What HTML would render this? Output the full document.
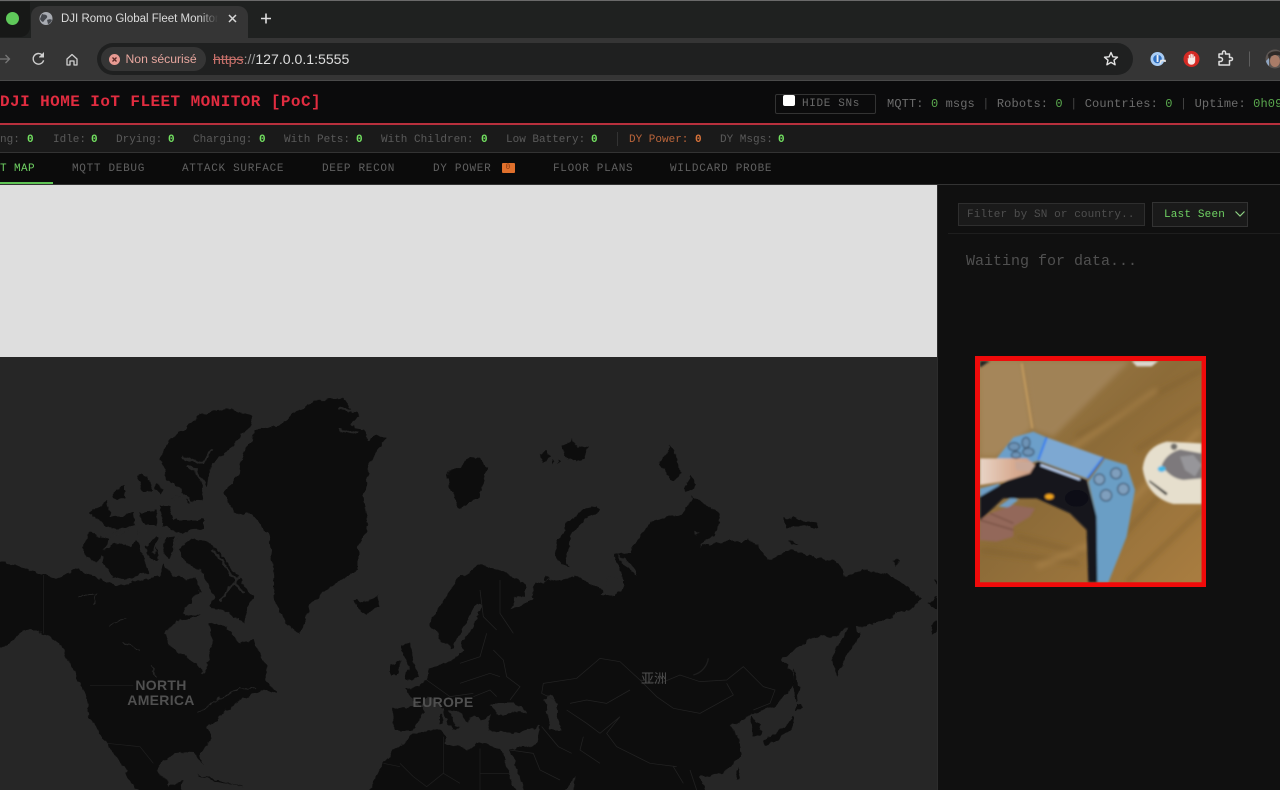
<!DOCTYPE html>
<html><head><meta charset="utf-8"><title>DJI Romo Global Fleet Monitor</title>
<style>
html,body{margin:0;padding:0;background:#111;width:1280px;height:790px;overflow:hidden}
.a{position:absolute}
#r{position:relative;width:1280px;height:790px;overflow:hidden;font-family:"Liberation Mono",monospace}
.t{position:absolute;white-space:pre}
.s{font-family:"Liberation Sans",sans-serif}
.st{top:133px;font-size:11px;line-height:14px;color:#5a5a5a}
.z{top:133px;font-size:11px;line-height:14px;color:#72e060;font-weight:bold}
.tb{top:162px;font-size:11px;line-height:14px;letter-spacing:.7px;color:#606060}
.h{top:97px;font-size:12px;line-height:14px;letter-spacing:.12px;color:#6c6c6c}
.g{color:#5aa84e}
</style></head><body><div id="r">
<!-- browser chrome -->
<div class="a" style="left:0;top:0;width:1280px;height:1px;background:#6a6a6a"></div>
<div class="a" style="left:0;top:1px;width:1280px;height:37px;background:#1f2120"></div>
<div class="a" style="left:0;top:38px;width:1280px;height:42px;background:#353535"></div>
<div class="a" style="left:0;top:80px;width:1280px;height:1px;background:#4a4a4a"></div>
<div class="a" style="left:0;top:2px;width:30px;height:35px;background:#171817;border-radius:0 0 10px 0"></div>
<div class="a" style="left:6px;top:12px;width:13px;height:13px;border-radius:50%;background:#5fc95a"></div>
<div class="a" style="left:31px;top:6px;width:217px;height:32px;background:#353535;border-radius:10px 10px 0 0"></div>
<svg class="a" style="left:0;top:0" width="300" height="80" fill="none">
<circle cx="46" cy="18.500" r="6.500" fill="#a8abb2"/>
<path d="M42 14c2 1 4 0 5 2s-2 3-3 5-3 0-4-2zM47 20c2-1 4-1 5 0-1 2-2 4-4 4z" fill="#45484e"/>
<path d="M229 15l7 7M236 15l-7 7" stroke="#d8d8d8" stroke-width="1.500"/>
<path d="M266 13.500v10M261 18.500h10" stroke="#dedede" stroke-width="1.600"/>
<path d="M0 59h9M5.500 55l4 4-4 4" stroke="#777" stroke-width="1.300"/>
<path d="M43 56a5.300 5.300 0 1 0 .6 4.300" stroke="#cfcfcf" stroke-width="1.400"/>
<path d="M43.500 52.500v4.500h-4.500" fill="#cfcfcf" stroke="#cfcfcf" stroke-width="1"/>
<path d="M67 59l5-4.500 5 4.500v6h-3v-4h-4v4h-3z" stroke="#cfcfcf" stroke-width="1.300" stroke-linejoin="round"/>
</svg>
<div class="t s" style="left:61px;top:11px;width:157px;overflow:hidden;font-size:11.500px;line-height:16px;color:#dcdcdc;-webkit-mask-image:linear-gradient(90deg,#000 88%,transparent);mask-image:linear-gradient(90deg,#000 88%,transparent)">DJI Romo Global Fleet Monitor</div>
<div class="a" style="left:97px;top:43px;width:1036px;height:32px;background:#1f2020;border-radius:16px"></div>
<div class="a" style="left:101px;top:47px;width:105px;height:24px;background:#353535;border-radius:12px"></div>
<div class="a" style="left:109px;top:53.500px;width:11px;height:11px;border-radius:50%;background:#e89a92"></div>
<svg class="a" style="left:109px;top:53.500px" width="11" height="11"><path d="M3.500 3.500l4 4M7.500 3.500l-4 4" stroke="#5a2a28" stroke-width="1.300"/></svg>
<div class="t s" style="left:125.500px;top:51px;font-size:12.200px;line-height:16px;color:#e8a79f">Non sécurisé</div>
<div class="t s" style="left:213px;top:51px;font-size:14.100px;line-height:16px;color:#dedede"><span style="color:#c9716b;text-decoration:line-through">https</span><span style="color:#9a9a9a">://</span>127.0.0.1:5555</div>
<svg class="a" style="left:1100px;top:48px" width="180" height="24" fill="none">
<path d="M11 4.500l1.900 4.300 4.600.4-3.500 3 1.100 4.600-4.100-2.400-4.100 2.400 1.100-4.600-3.500-3 4.600-.4z" stroke="#e2e2e2" stroke-width="1.400" stroke-linejoin="round"/>
<circle cx="57.500" cy="11" r="7" fill="#a9cdf5"/><circle cx="57.500" cy="11" r="4.300" fill="#2f6fc0"/><rect x="56.600" y="7" width="1.900" height="7" fill="#e8eef5"/>
<path d="M60 15.500l1-3h4v1.500" stroke="#e8e8e8" stroke-width="1.600"/>
<circle cx="91.500" cy="11" r="8" fill="#d42a24"/>
<path d="M88 10v3.500c0 2 1.500 3 3.500 3s3.500-1.300 3.500-3.500V8.500h-1V10h-.6V6.500h-1V10h-.7V6h-1.100v4h-.7V7h-1v5z" fill="#f6e9e6" stroke="#f6e9e6" stroke-width=".4"/>
<path d="M119 6h3.500V4.500a1.500 1.500 0 0 1 3 0V6h4v3.500h1.500a1.500 1.500 0 0 1 0 3h-1.500V17h-10.500v-3.500h1.500a2 2 0 0 0 0-4H119z" stroke="#dedede" stroke-width="1.500" stroke-linejoin="round"/>
<path d="M149.500 3.500v15" stroke="#5e5e5e" stroke-width="1"/>
<circle cx="175" cy="11" r="9.500" fill="#5c5552"/><path d="M168 7c2-4 10-5 14-2v5l-3-3-8 1-2 4z" fill="#2f2a28"/><ellipse cx="175" cy="13" rx="5" ry="6" fill="#a97c68"/><path d="M166 13a9.500 9.500 0 0 0 3 5l0-8z" fill="#8fa6c2"/>
</svg>
<!-- app header -->
<div class="a" style="left:0;top:81px;width:1280px;height:42px;background:#0b0b0c"></div>
<div class="a" style="left:0;top:123px;width:1280px;height:2px;background:#b8303d"></div>
<div class="a" style="left:0;top:125px;width:1280px;height:27px;background:#1a1a1a"></div>
<div class="a" style="left:0;top:152px;width:1280px;height:1px;background:#333"></div>
<div class="a" style="left:0;top:153px;width:1280px;height:31px;background:#0b0b0b"></div>
<div class="a" style="left:0;top:184px;width:1280px;height:1px;background:#333"></div>
<div class="t" style="left:0;top:92px;font-size:16px;line-height:20px;font-weight:bold;letter-spacing:.43px;color:#e12c40">DJI HOME IoT FLEET MONITOR [PoC]</div>
<div class="a" style="left:775px;top:94px;width:99px;height:18px;border:1px solid #333;border-radius:2px"></div>
<div class="a" style="left:783px;top:95px;width:12px;height:11px;background:#fff;border-radius:2px"></div>
<div class="t" style="left:802px;top:97px;font-size:11px;line-height:14px;letter-spacing:.65px;color:#6a6a6a">HIDE SNs</div>
<div class="t h" style="left:887px">MQTT: <span class="g">0</span> msgs <span style="color:#444">|</span> Robots: <span class="g">0</span> <span style="color:#444">|</span> Countries: <span class="g">0</span> <span style="color:#444">|</span> Uptime: <span class="g">0h09m</span></div>
<!-- stats -->
<div class="t st" style="left:0">ng:</div><div class="t z" style="left:27px">0</div>
<div class="t st" style="left:53px">Idle:</div><div class="t z" style="left:91px">0</div>
<div class="t st" style="left:116px">Drying:</div><div class="t z" style="left:168px">0</div>
<div class="t st" style="left:193px">Charging:</div><div class="t z" style="left:259px">0</div>
<div class="t st" style="left:284px">With Pets:</div><div class="t z" style="left:356px">0</div>
<div class="t st" style="left:381px">With Children:</div><div class="t z" style="left:481px">0</div>
<div class="t st" style="left:506px">Low Battery:</div><div class="t z" style="left:591px">0</div>
<div class="a" style="left:617px;top:132px;width:1px;height:14px;background:#333"></div>
<div class="t st" style="left:629px;color:#b9643a">DY Power:</div><div class="t z" style="left:695px;color:#d9733a">0</div>
<div class="t st" style="left:720px">DY Msgs:</div><div class="t z" style="left:778px">0</div>
<!-- tabs -->
<div class="t tb" style="left:0;color:#6fd163;letter-spacing:.4px">T MAP</div>
<div class="a" style="left:0;top:182px;width:53px;height:2px;background:#5fc455"></div>
<div class="t tb" style="left:72px">MQTT DEBUG</div>
<div class="t tb" style="left:182px">ATTACK SURFACE</div>
<div class="t tb" style="left:322px">DEEP RECON</div>
<div class="t tb" style="left:433px">DY POWER</div>
<div class="a" style="left:502px;top:163px;width:13px;height:10px;background:#e0702c;border-radius:1px"></div>
<div class="t" style="left:505.500px;top:163px;font-size:8px;line-height:10px;color:#8a3a10">0</div>
<div class="t tb" style="left:553px">FLOOR PLANS</div>
<div class="t tb" style="left:670px">WILDCARD PROBE</div>
<!-- sidebar -->
<div class="a" style="left:937px;top:185px;width:343px;height:605px;background:#101010"></div>
<div class="a" style="left:937px;top:185px;width:1px;height:605px;background:#2c2c2c"></div>
<div class="a" style="left:948px;top:233px;width:332px;height:1px;background:#1e1e1e"></div>
<div class="a" style="left:958px;top:203px;width:185px;height:21px;background:#1a1a1a;border:1px solid #2e2e2e"></div>
<div class="t" style="left:967px;top:208px;font-size:11px;line-height:14px;letter-spacing:.1px;color:#4f4f4f">Filter by SN or country..</div>
<div class="a" style="left:1152px;top:202px;width:94px;height:23px;background:#1a1a1a;border:1px solid #333"></div>
<div class="t" style="left:1164px;top:208px;font-size:11px;line-height:14px;letter-spacing:.18px;color:#6fd163">Last Seen</div>
<svg class="a" style="left:1234px;top:210px" width="12" height="8" fill="none"><path d="M1.500 1.500l4.500 4.500 4.500-4.500" stroke="#8fd184" stroke-width="1.200"/></svg>
<div class="t" style="left:966px;top:253px;font-size:15px;line-height:18px;color:#505050">Waiting for data...</div>
<!-- map -->
<div class="a" style="left:0;top:185px;width:937px;height:172px;background:#dedede"></div>
<svg class="a" style="left:0;top:357px" width="937" height="433" viewBox="0 357 937 433">
<defs><filter id="rg" filterUnits="userSpaceOnUse" x="-20" y="340" width="980" height="470"><feTurbulence type="fractalNoise" baseFrequency=".11" numOctaves="3" seed="4" result="n"/><feDisplacementMap in="SourceGraphic" in2="n" scale="7" xChannelSelector="R" yChannelSelector="G"/></filter></defs>
<rect x="0" y="357" width="937" height="433" fill="#262626"/>
<g filter="url(#rg)">
<g transform="translate(0,350) scale(.33333)" fill="#0a0a0a">
<path d="M900 855L860 820 825 760 820 650 805 560 760 495 700 490 672 420 720 370 725 320 770 240 840 225 880 190 950 150 1030 145 1075 200 1050 225 1090 240 1100 270 1130 255 1158 265 1110 340 1090 440 1105 520 1075 600 1075 660 990 710 930 770z"/>
<path d="M520 260L600 195 680 175 750 195 755 225 700 285 640 340 620 400 600 450 560 460 545 420 500 385 480 320 510 280z"/>
<path d="M270 490L320 450 330 500 400 490 405 525 350 545 310 520z"/>
<path d="M410 380L440 375 460 420 430 430zM340 430L375 400 375 445 350 450zM420 490L470 480 470 525 440 525zM470 400L490 420 480 435 465 420z"/>
<path d="M480 465L510 470 520 510 610 510 610 535 540 545 490 530z"/>
<path d="M250 590L265 548 330 570 290 635 260 620z"/>
<path d="M305 600L360 580 390 590 410 570 445 665 395 690 340 680 310 640z"/>
<path d="M435 590L470 560 475 630 450 625zM490 565L525 560 510 625 490 610z"/>
<path d="M535 600L570 565 630 575 700 660 760 740 730 820 690 790 630 770 640 740 600 660 560 640z"/>
<path d="M-30 625L120 670 170 690 230 655 300 690 350 710 420 690 480 680 490 640 520 680 560 690 590 680 600 720 570 760 550 790 600 800 530 810 495 850 510 890 590 940 610 975 625 930 640 880 630 815 680 830 720 880 760 870 800 950 800 990 830 1030 790 1020 740 1040 700 1060 660 1100 620 1130 640 1165 600 1210 610 1245 580 1200 500 1220 470 1260 510 1310 550 1290 540 1350 430 1350 370 1250 320 1180 270 1110 260 1040 230 980 180 880 130 850 70 840 30 880-30 905z"/>
<path d="M590 1272L650 1290 700 1305 730 1312 660 1300z"/>
<path d="M1060 750L1100 755 1130 740 1140 770 1100 795 1075 780z"/>
<path d="M1340 370L1380 350 1400 330 1440 325 1460 350 1440 440 1380 475 1345 400z"/>
<path d="M1205 885L1230 880 1240 930 1260 985 1215 990 1225 950zM1170 945L1200 935 1195 975 1170 975z"/>
<path d="M1180 1075L1260 1070 1275 1085 1240 1140 1180 1140z"/>
<path d="M1095 1350L1150 1235 1240 1150 1320 1140 1340 1160 1335 1180 1400 1200 1440 1180 1500 1195 1560 1350z"/>
<path d="M1320 1090h8v30h-8zM1355 1125l25 3-20 12z"/>
</g>
<g transform="translate(0,350) scale(.33333)" fill="none" stroke="#262626">
<g stroke-width="7"><path d="M545 320l60 20 30-45M560 345l30 20 25 50M1010 175l50 5M1015 240l60 5M640 600l30 40 60 90M720 680l-60 70M500 460l40-25 40 25M330 560l60-20M410 540l20 40M480 560l-20 50M540 550l-20 60"/></g>
<g stroke-width="3"><path d="M240 740l50-10-15 30M330 830l50-25M370 880l50 20M450 950l20 30M590 1090l60-40 60-30 60-10"/></g>
</g>
<g transform="translate(460,350) scale(.33333)" fill="#0a0a0a">
<path d="M-90 830L-80 800-10 690 60 645 110 655 190 700 198 740 160 745 150 780 220 750 230 700 260 695 350 680 420 710 440 740 470 720 490 690 460 610 510 610 530 570 570 520 660 490 700 440 780 490 770 545 720 590 800 570 860 570 900 590 920 630 1000 600 1060 620 1140 640 1155 680 1210 660 1300 680 1385 745 1360 775 1300 790 1290 810 1210 830 1160 830 1130 860 1060 860 960 930 1000 960 1000 1010 940 1070 880 1090 815 1130 840 1180 840 1220 790 1270 720 1280 740 1350 340 1350 345 1275 300 1350 200 1350 150 1200 235 1180 240 1130 160 1150 85 1145 90 1095 60 1110 40 1090 25 1120 0 1090-30 1080-15 1130-40 1125-50 1075-80 1050-100 1040-120 1070-165 1020-100 990-90 955-30 935 10 900 0 880 20 860 40 830 70 760 50 760 10 830-10 870-30 900-40 880z"/>
<path d="M410 465L420 480 370 510 330 560 320 630 330 650 290 635 285 600 320 520 370 480z"/>
<path d="M600 340L630 285 650 320 665 365 640 395 605 350zM670 420L690 375 712 400 680 430z"/>
<path d="M970 500L1025 510 1070 520 1075 535 1030 525 975 535zM990 565l25 15-20 5zM1300 630l25 5-25 10zM225 700l15 10-20 20zM255 680l15 10-15 5z"/>
<path d="M235 310l25-10 10 20-25 20zM305 290l30-25 15 30 40-5-15 30-25 20-35-20zM290 330l10 5-5 5zM270 330l10 5-5 8z"/>
<path d="M1180 815L1200 850 1130 980 1115 920 1150 860z"/>
<path d="M1005 950l15 70-15 40-5-60zM1005 1065l25 8-25 12zM1000 1100v30l-40 30-45 30v-20l60-40zM870 1100l35 25-5 35h-20z"/>
<path d="M1420 690l15 2v18zM1405 760l27-20v40zM1420 820l12-10v30l-15 15z"/>
<path d="M830 1250l12 30-12 10z"/>
</g>
<g transform="translate(460,350) scale(.33333)" fill="#262626">
<path d="M95 1060l70 0 35 25-90 8zM250 1050l25-15 20 30-5 40 12 35-30 0-5-50z"/>
<path d="M425 735l20-50 30-5 15 30-25 30zM470 610l50 40 15 30-30-20zM700 540l20 10-15 5z"/>
</g>
</g>
<g transform="translate(460,350) scale(.33333)" fill="none" stroke="#232323" stroke-width="2.200">
<path d="M250 1000l100-15 70-60 60 10 60 55 60 10 60-25 60 20 80-5 50-40 60 60 35 10-15 40-50 20M540 990l50 50 50 35 80 15 100-55-20-35M250 1000l-5 30 40 20M330 1060l50-10 60 10 70-40M320 1080l60 40 40 30 60-50M480 1100l-40 50 30 40 40 20 60 30 80 10M370 1160l-10 40 60 40M245 1130l50 60 40 20M150 1200l70 10 20 50 60 30M100 900l30 30 10 50 40 30-30 40M0 1000l90-30 30 10M40 1040l50-20 20 20M0 940l60-20 20-70M60 720l10 80 40 40M120 690l0 100 40 60M-100 990l70 50 70-10M640 1250l30 50M690 1260l20 60"/>
<path d="M700 975a60 60 0 0 0 45-50" stroke="#1e1e1e" stroke-width="4"/>
<path d="M60 1195v130M60 1270l90 0" stroke="#1e1e1e"/>
</g>
<g transform="translate(0,350) scale(.33333)" fill="none" stroke="#202020" stroke-width="2">
<path d="M130 675V850M270 1007H400M320 1180l100 10 40 50M1200 1240l40 40 40 30 50-40 50 30M1330 1160v110M1150 1240l50 10"/>
</g>
<text x="161" y="690" text-anchor="middle" font-family="Liberation Sans,sans-serif" font-weight="bold" font-size="14" letter-spacing=".3" fill="#505050">NORTH</text>
<text x="161" y="705" text-anchor="middle" font-family="Liberation Sans,sans-serif" font-weight="bold" font-size="14" letter-spacing=".3" fill="#505050">AMERICA</text>
<text x="443" y="707" text-anchor="middle" font-family="Liberation Sans,sans-serif" font-weight="bold" font-size="14" letter-spacing=".3" fill="#505050">EUROPE</text>
<text x="654" y="683" text-anchor="middle" font-family="Noto Sans CJK SC,sans-serif" font-size="13" fill="#505050">亚洲</text>
</svg>
<!-- overlay photo -->
<svg class="a" style="left:975px;top:356px" width="231" height="231" viewBox="975 356 231 231">
<defs><clipPath id="c"><rect x="30" y="33" width="665" height="664"/></clipPath>
<linearGradient id="w" x1="0" y1="0" x2="1" y2="1"><stop offset="0" stop-color="#a0814f"/><stop offset=".45" stop-color="#8c6b38"/><stop offset="1" stop-color="#a97d40"/></linearGradient>
<linearGradient id="th" x1="0" y1="0" x2="1" y2="0"><stop offset="0" stop-color="#e8d4c6"/><stop offset=".6" stop-color="#d8ac92"/><stop offset="1" stop-color="#c99a80"/></linearGradient>
<filter id="b" x="-5%" y="-5%" width="110%" height="110%"><feGaussianBlur stdDeviation="8"/></filter>
<filter id="b2" x="-5%" y="-5%" width="110%" height="110%"><feGaussianBlur stdDeviation="3"/></filter></defs>
<g transform="translate(970,350) scale(.33333)">
<rect x="15" y="18" width="693" height="693" fill="#f00a0a"/>
<g clip-path="url(#c)"><rect x="30" y="33" width="665" height="664" fill="url(#w)"/>
<g filter="url(#b)">
<path d="M30 33H155L185 235 80 320 30 320z" fill="#a5865a"/>
<path d="M160 33H480L250 260 190 240z" fill="#a08257"/>
<path d="M320 260L695 60M500 300L695 170M420 600L695 300M470 697L695 480M30 600l300 40M140 560l200 50" stroke="#7c5c2c" stroke-width="14" fill="none" opacity=".5"/>
<path d="M300 300L560 120M420 520L690 240M200 650L420 560" stroke="#b48c50" stroke-width="16" fill="none" opacity=".5"/>
</g>
<g filter="url(#b2)">
<path d="M155 40l32 195" stroke="#c99f5f" stroke-width="5" fill="none"/>
<path d="M30 33h30l-30 20z" fill="#222"/>
<path d="M485 33h80l-20 16h-45z" fill="#dcd8d0"/>
<path d="M80 325L130 262 190 245 230 262 205 332 110 360z" fill="#6c9fc9"/>
<path d="M30 415L90 400 30 490zM85 470l40-28 20 8-30 22z" fill="#6f9fc6"/>
<path d="M205 335L350 390 380 500 385 697H355L350 540 300 490 200 445 100 445 30 512 30 440 90 405z" fill="#14161e"/>
<path d="M230 262L400 322 350 385 205 332z" fill="#7da8d2"/>
<path d="M405 325L470 345 495 420 470 560 415 697H382L380 500 355 395z" fill="#6b9ec5"/>
<path d="M230 262L205 330M400 322L352 385" stroke="#2f7cf0" stroke-width="6" fill="none"/>
<path d="M212 345L330 388" stroke="#c6dcff" stroke-width="6" fill="none"/>
<path d="M30 325H170L195 345 180 370 100 395 30 405z" fill="url(#th)"/>
<path d="M135 335h50l8 14-15 16-40-5z" fill="#c9a898"/>
<path d="M60 490L130 465 195 475 180 500 130 530 130 560 80 575 30 570 30 510z" fill="#93675a"/>
<path d="M30 510l100 30M60 490l70 30" stroke="#6f4a3a" stroke-width="3" fill="none"/>
<ellipse cx="238" cy="440" rx="13" ry="8" fill="#f2a51c"/>
<ellipse cx="320" cy="445" rx="35" ry="25" fill="#0b0c12"/>
<g fill="#7f9fbd" stroke="#2d3f55" stroke-width="3"><circle cx="388" cy="388" r="16"/><circle cx="438" cy="370" r="16"/><circle cx="460" cy="417" r="17"/><circle cx="408" cy="436" r="17"/></g>
<g fill="#6d93b6" stroke="#2d3f55" stroke-width="3"><ellipse cx="132" cy="290" rx="17" ry="12"/><ellipse cx="168" cy="278" rx="12" ry="16"/><ellipse cx="175" cy="306" rx="17" ry="12"/><ellipse cx="138" cy="315" rx="14" ry="10"/></g>
<path d="M518 355Q525 290 590 275L695 280V462L610 462Q530 440 518 355z" fill="#e6dfcd"/>
<path d="M575 345Q590 310 630 298L695 310V385L640 390Q600 385 575 345z" fill="#7d797c"/>
<path d="M630 320l40-5 25 30-20 35-30-20z" fill="#97969a"/>
<ellipse cx="575" cy="357" rx="12" ry="9" fill="#3fb8e8"/>
<path d="M538 390l55 40-5 6-50-40z" fill="#1c1c1c"/>
<circle cx="612" cy="290" r="10" fill="#706d68"/>
</g></g></g></svg>
</div></body></html>
